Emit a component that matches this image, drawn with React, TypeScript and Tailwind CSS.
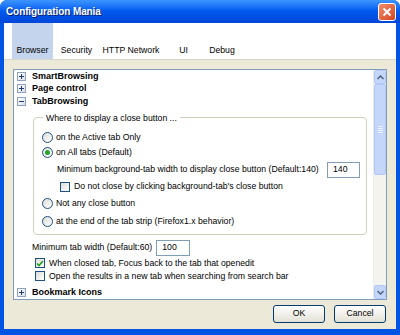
import React from "react";

const font = { fontFamily: '"Liberation Sans", Arial, sans-serif' };

function Expander({ open }: { open?: boolean }) {
  return (
    <span className="w-[9px] h-[9px] border border-[#8ea2bd] bg-gradient-to-br from-white to-[#d9dde4] flex items-center justify-center shrink-0">
      <svg width="5" height="5" viewBox="0 0 5 5">
        <rect x="0" y="2" width="5" height="1" fill="#1f3b6b" />
        {!open && <rect x="2" y="0" width="1" height="5" fill="#1f3b6b" />}
      </svg>
    </span>
  );
}

function Radio({ checked }: { checked?: boolean }) {
  return (
    <span className="w-[11px] h-[11px] rounded-full border border-[#1c5180] bg-gradient-to-br from-[#dcdcd7] to-white flex items-center justify-center shrink-0">
      {checked && <span className="w-[5px] h-[5px] rounded-full bg-[#2ba32b]" />}
    </span>
  );
}

function Check({ checked }: { checked?: boolean }) {
  return (
    <span className="w-[10px] h-[10px] border border-[#1c5180] bg-gradient-to-br from-[#dcdcd7] to-white flex items-center justify-center shrink-0">
      {checked && (
        <svg width="8" height="7" viewBox="0 0 8 7">
          <path d="M1 3.5 L3 5.5 L7 1" stroke="#21a121" strokeWidth="1.6" fill="none" />
        </svg>
      )}
    </span>
  );
}

function Tree({ label, open }: { label: string; open?: boolean }) {
  return (
    <div className="flex items-center h-[12.5px] pl-[3px] gap-[6px]">
      <Expander open={open} />
      <span className="font-bold text-[9px] whitespace-nowrap">{label}</span>
    </div>
  );
}

function Field({ value, w }: { value: string; w: string }) {
  return (
    <span className={`h-[16px] ${w} border border-[#7f9db9] bg-white flex items-center pl-[5px]`}>{value}</span>
  );
}

export default function App() {
  const tabs = [
    { label: "Browser", w: "w-[41px]", active: true },
    { label: "Security", w: "w-[47px]" },
    { label: "HTTP Network", w: "w-[62px]" },
    { label: "UI", w: "w-[43px]" },
    { label: "Debug", w: "w-[34px]" },
  ];

  return (
    <div style={font} className="w-[400px] h-[335px] bg-[#0054e3] flex flex-col rounded-t-[7px] overflow-hidden text-[8.7px] text-black whitespace-nowrap">
      <div className="h-[23px] shrink-0 flex items-center justify-between pl-[6px] pr-[4px] bg-gradient-to-b from-[#3d95ff] via-[#0058ee] to-[#0047d8]">
        <span className="text-white font-bold text-[10px] tracking-[-0.1px] [text-shadow:1px_1px_0_#0a1e6e]">Configuration Mania</span>
        <span className="w-[18px] h-[18px] rounded-[3px] border border-white bg-gradient-to-br from-[#f08c6a] to-[#d4421c] flex items-center justify-center">
          <svg width="10" height="10" viewBox="0 0 10 10">
            <path d="M1.5 1.5 L8.5 8.5 M8.5 1.5 L1.5 8.5" stroke="white" strokeWidth="2" />
          </svg>
        </span>
      </div>

      <div className="flex-1 ml-[4px] mr-[4px] mb-[6px] bg-[#ece9d8] flex flex-col">
        <div className="h-[37px] bg-white flex items-stretch pl-[8px] border-b border-[#d8d6cc]">
          {tabs.map((t) => (
            <div
              key={t.label}
              className={`${t.w} flex items-end justify-center pb-[2px] ${t.active ? "bg-[#c3d4ec]" : ""}`}
            >
              {t.label}
            </div>
          ))}
        </div>

        <div className="mt-[9px] ml-[9px] w-[374px] h-[231px] border border-[#7f9db9] bg-white flex overflow-hidden">
          <div className="flex-1 flex flex-col">
            <Tree label="SmartBrowsing" />
            <Tree label="Page control" />
            <Tree label="TabBrowsing" open />

            <fieldset className="mt-[4px] ml-[19px] w-[334px] border border-[#d0d0bf] rounded-[4px] pl-[8px] pb-[5px]">
              <legend className="ml-[1px] px-[3px] leading-[12px]">Where to display a close button ...</legend>
              <div className="flex items-center gap-[3px] h-[14px] mt-[7px]">
                <Radio />
                <span>on the Active tab Only</span>
              </div>
              <div className="flex items-center gap-[3px] h-[16px]">
                <Radio checked />
                <span>on All tabs (Default)</span>
              </div>
              <div className="flex items-center justify-between h-[19px] pl-[15px] pr-[6px]">
                <span>Minimum background-tab width to display close button (Default:140)</span>
                <Field value="140" w="w-[33px]" />
              </div>
              <div className="flex items-center gap-[4px] h-[14px] pl-[18px]">
                <Check />
                <span>Do not close by clicking background-tab's close button</span>
              </div>
              <div className="flex items-center gap-[3px] h-[20px]">
                <Radio />
                <span>Not any close button</span>
              </div>
              <div className="flex items-center gap-[3px] h-[14px] mt-[1px]">
                <Radio />
                <span>at the end of the tab strip (Firefox1.x behavior)</span>
              </div>
            </fieldset>

            <div className="flex items-center h-[16px] mt-[5px] pl-[18px] gap-[4px]">
              <span>Minimum tab width (Default:60)</span>
              <Field value="100" w="w-[34px]" />
            </div>
            <div className="flex items-center h-[17px] mt-[1px] pl-[21px] gap-[4px]">
              <Check checked />
              <span>When closed tab, Focus back to the tab that openedit</span>
            </div>
            <div className="flex items-center h-[15px] pl-[21px] gap-[4px]">
              <Check />
              <span>Open the results in a new tab when searching from search bar</span>
            </div>
            <div className="mt-[4px]">
              <Tree label="Bookmark Icons" />
            </div>
          </div>

          <div className="w-[13px] shrink-0 flex flex-col bg-[#f4f3ee] border-l border-[#eeede5]">
            <div className="h-[14px] bg-[#c5d6fb] border border-[#b4c8f6] rounded-[2px] flex items-center justify-center">
              <svg width="7" height="5" viewBox="0 0 7 5">
                <path d="M0.5 4 L3.5 1 L6.5 4" stroke="#4d6185" strokeWidth="1.5" fill="none" />
              </svg>
            </div>
            <div className="h-[91px] bg-[#c5d6fb] border border-[#b4c8f6] rounded-[2px] flex flex-col items-center justify-center gap-[1px]">
              <span className="w-[5px] h-[1px] bg-[#eef4fe]" />
              <span className="w-[5px] h-[1px] bg-[#eef4fe]" />
              <span className="w-[5px] h-[1px] bg-[#eef4fe]" />
              <span className="w-[5px] h-[1px] bg-[#eef4fe]" />
            </div>
            <div className="flex-1" />
            <div className="h-[14px] bg-[#c5d6fb] border border-[#b4c8f6] rounded-[2px] flex items-center justify-center">
              <svg width="7" height="5" viewBox="0 0 7 5">
                <path d="M0.5 1 L3.5 4 L6.5 1" stroke="#4d6185" strokeWidth="1.5" fill="none" />
              </svg>
            </div>
          </div>
        </div>

        <div className="flex justify-end gap-[9px] mt-[5px] pr-[10px]">
          <button className="w-[52px] h-[18px] rounded-[3px] border border-[#003c74] bg-gradient-to-b from-white to-[#e3e1d6]">OK</button>
          <button className="w-[52px] h-[18px] rounded-[3px] border border-[#003c74] bg-gradient-to-b from-white to-[#e3e1d6]">Cancel</button>
        </div>
      </div>
    </div>
  );
}
